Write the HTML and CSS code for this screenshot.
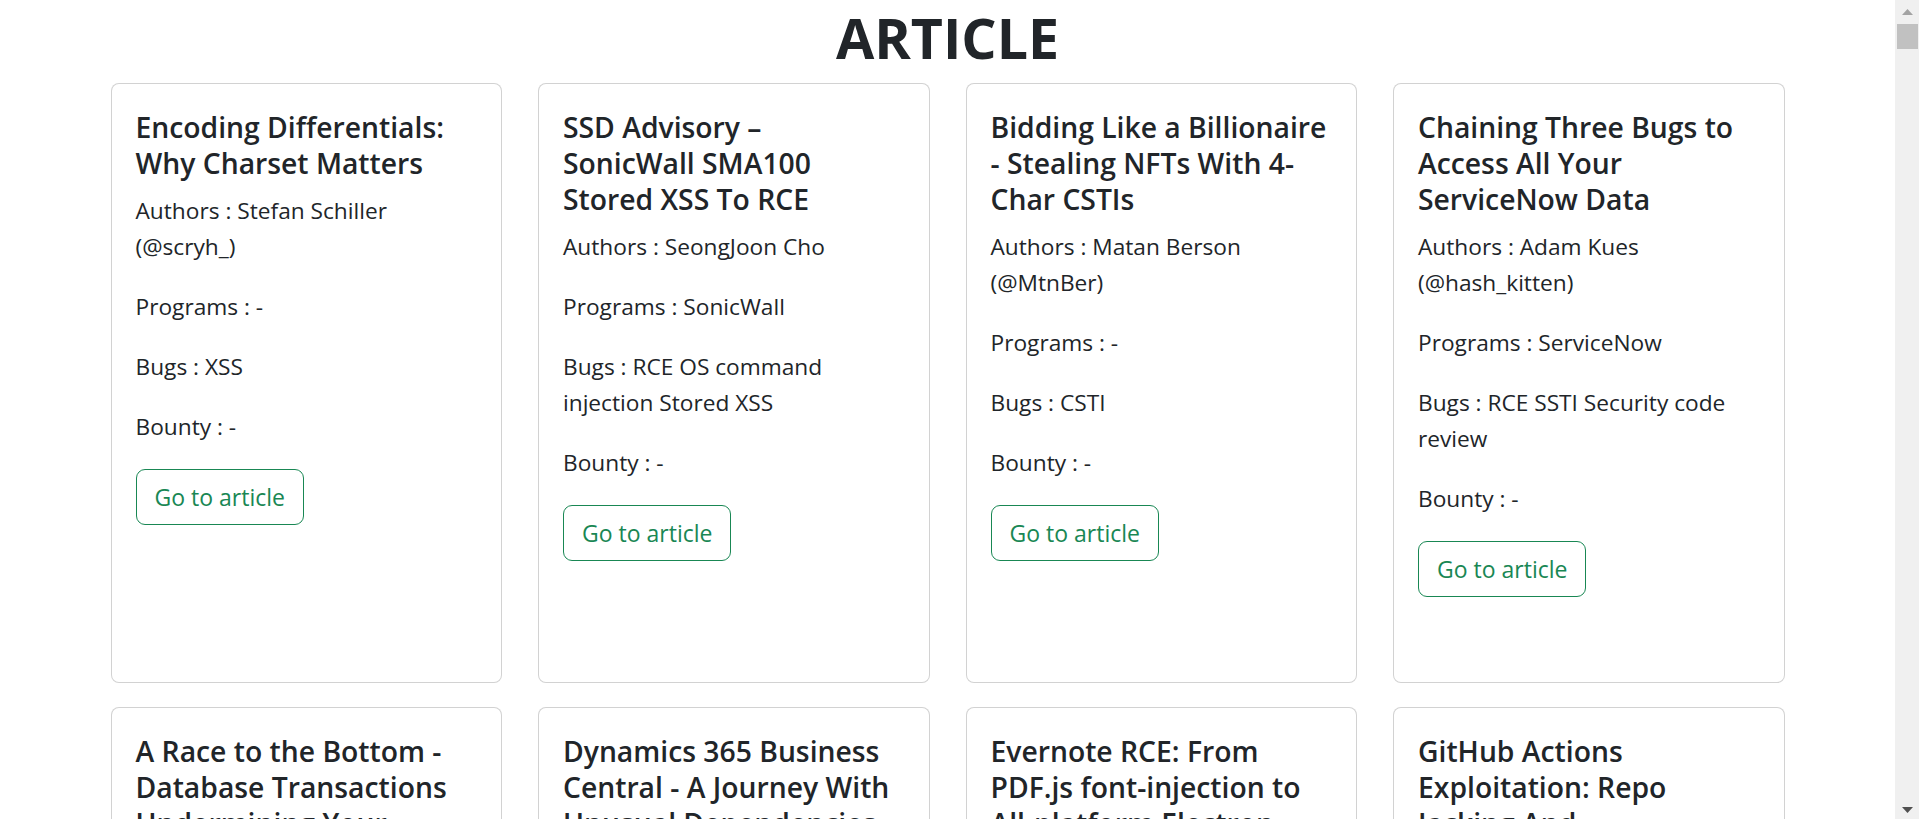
FILE: index.html
```html
<!DOCTYPE html>
<html lang="en">
<head>
<meta charset="utf-8">
<title>Article</title>
<link rel="stylesheet" href="styles.css">
</head>
<body>
<main class="container">
  <h1 class="page-title">ARTICLE</h1>
  <div class="card-grid">
    <div class="card">
      <h5 class="card-title">Encoding Differentials: Why Charset Matters</h5>
      <p>Authors : Stefan Schiller (@scryh_)</p>
      <p>Programs : -</p>
      <p>Bugs : XSS</p>
      <p>Bounty : -</p>
      <a class="btn" href="#">Go to article</a>
    </div>
    <div class="card">
      <h5 class="card-title">SSD Advisory –<br>SonicWall SMA100<br>Stored XSS To RCE</h5>
      <p>Authors : SeongJoon Cho</p>
      <p>Programs : SonicWall</p>
      <p>Bugs : RCE OS command injection Stored XSS</p>
      <p>Bounty : -</p>
      <a class="btn" href="#">Go to article</a>
    </div>
    <div class="card">
      <h5 class="card-title">Bidding Like a Billionaire - Stealing NFTs With 4-Char CSTIs</h5>
      <p>Authors : Matan Berson (@MtnBer)</p>
      <p>Programs : -</p>
      <p>Bugs : CSTI</p>
      <p>Bounty : -</p>
      <a class="btn" href="#">Go to article</a>
    </div>
    <div class="card">
      <h5 class="card-title">Chaining Three Bugs to Access All Your ServiceNow Data</h5>
      <p>Authors : Adam Kues (@hash_kitten)</p>
      <p>Programs : ServiceNow</p>
      <p>Bugs : RCE SSTI Security code review</p>
      <p>Bounty : -</p>
      <a class="btn" href="#">Go to article</a>
    </div>
    <div class="card">
      <h5 class="card-title">A Race to the Bottom - Database Transactions Undermining Your AppSec</h5>
      <p>Authors : Viktor Chuchurski</p>
      <p>Programs : -</p>
      <p>Bugs : Race condition</p>
      <p>Bounty : -</p>
      <a class="btn" href="#">Go to article</a>
    </div>
    <div class="card">
      <h5 class="card-title">Dynamics 365 Business Central - A Journey With Unusual Dependencies</h5>
      <p>Authors : -</p>
      <p>Programs : Microsoft</p>
      <p>Bugs : RCE</p>
      <p>Bounty : -</p>
      <a class="btn" href="#">Go to article</a>
    </div>
    <div class="card">
      <h5 class="card-title">Evernote RCE: From PDF.js font-injection to All-platform Electron exec() Bug</h5>
      <p>Authors : -</p>
      <p>Programs : Evernote</p>
      <p>Bugs : RCE</p>
      <p>Bounty : -</p>
      <a class="btn" href="#">Go to article</a>
    </div>
    <div class="card">
      <h5 class="card-title">GitHub Actions Exploitation: Repo Jacking And Environment Manipulation</h5>
      <p>Authors : -</p>
      <p>Programs : GitHub</p>
      <p>Bugs : Supply chain</p>
      <p>Bounty : -</p>
      <a class="btn" href="#">Go to article</a>
    </div>
  </div>
</main>
<div class="scrollbar" aria-hidden="true">
  <svg class="sb-arrow" width="24" height="24" viewBox="0 0 24 24"><path d="M7 15 L12.5 9 L18 15 Z" fill="#a3a3a3"/></svg>
  <div class="sb-thumb"></div>
  <div class="sb-track"></div>
  <svg class="sb-arrow" width="24" height="24" viewBox="0 0 24 24"><path d="M7 12 L18 12 L12.5 18 Z" fill="#505050"/></svg>
</div>
</body>
</html>
```
FILE: styles.css
```css
html {
  background: #fff;
}

body {
  margin: 0;
  padding-right: 24px;
  font-family: "Open Sans", "Noto Sans", sans-serif;
  font-size: 22.7px;
  line-height: 36px;
  color: #212529;
  background: #fff;
}

.container {
  max-width: 1710px;
  margin: 0 auto;
}

.page-title {
  margin: 2px 0 9px;
  font-size: 55.5px;
  line-height: 72px;
  font-weight: 700;
  text-align: center;
  color: #212529;
}

.card-grid {
  display: grid;
  grid-template-columns: repeat(4, 1fr);
  column-gap: 36px;
  row-gap: 24px;
  padding: 0 18px 24px;
}

.card {
  box-sizing: border-box;
  height: 600px;
  padding: 24px;
  border: 1px solid rgba(0, 0, 0, 0.175);
  border-radius: 8px;
  background: #fff;
  overflow: hidden;
}

.card-title {
  margin: 0 0 12px;
  padding-top: 1px;
  font-size: 28.3px;
  line-height: 36px;
  font-weight: 600;
}

.card p {
  margin: 0 0 24px;
}

.btn {
  display: inline-block;
  padding: 9px 18px;
  border: 1px solid #198754;
  border-radius: 9px;
  color: #198754;
  text-decoration: none;
  font-size: 23px;
  line-height: 36px;
}

.scrollbar {
  position: fixed;
  top: 0;
  right: 0;
  width: 24px;
  height: 100vh;
  display: flex;
  flex-direction: column;
  background: #f0f0f0;
}

.sb-arrow {
  display: block;
  flex: none;
}

.sb-thumb {
  flex: none;
  height: 25px;
  margin: 0 1px 0 2px;
  background: #c1c1c1;
}

.sb-track {
  flex: 1;
}
```
